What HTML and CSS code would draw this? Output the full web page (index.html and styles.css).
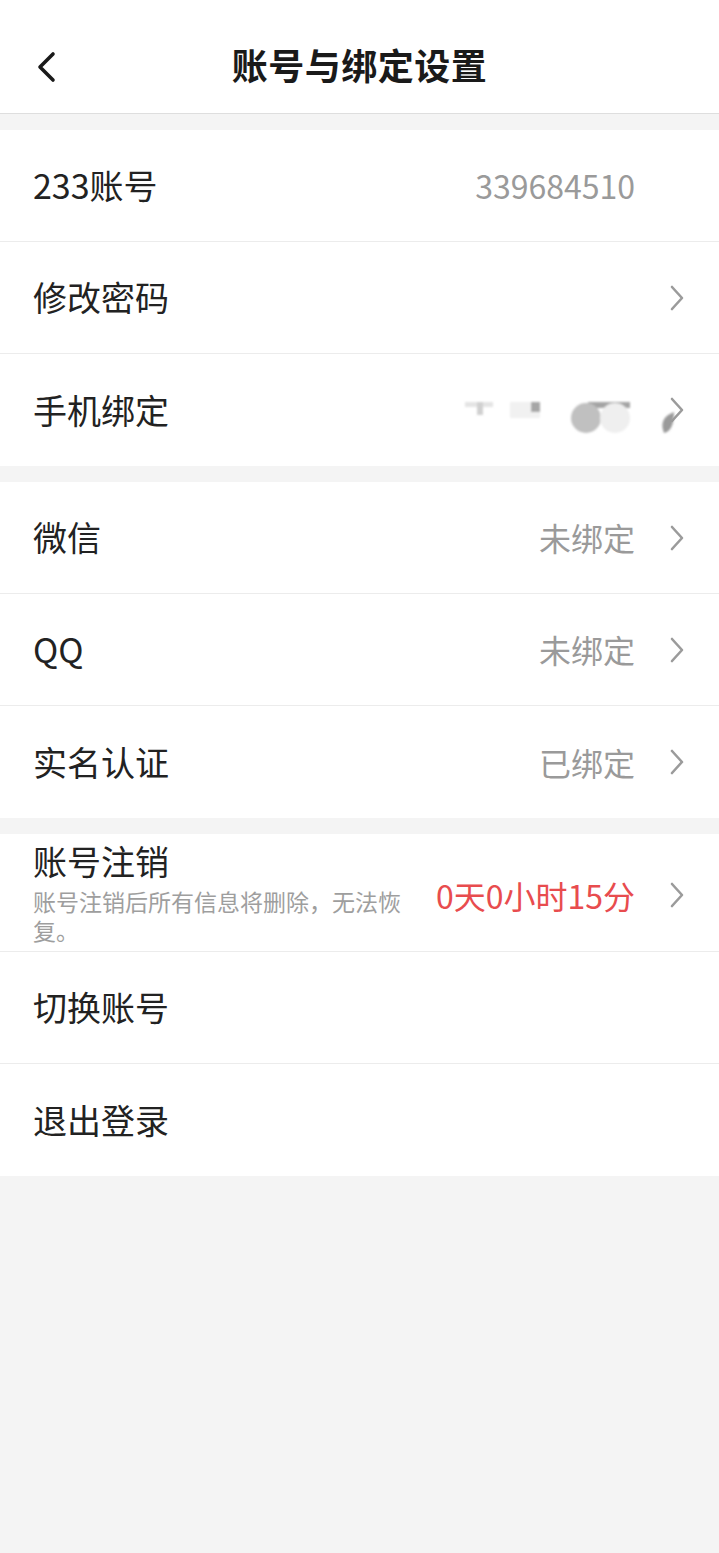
FILE: index.html
```html
<!DOCTYPE html>
<html lang="zh-CN">
<head>
<meta charset="utf-8">
<title>账号与绑定设置</title>
<link rel="stylesheet" href="styles.css">
</head>
<body>
<header class="topbar">
  <svg class="back" width="22" height="32" viewBox="0 0 22 32"><path d="M18 3 L5 16 L18 29" fill="none" stroke="#1a1a1a" stroke-width="3.6" stroke-linecap="round" stroke-linejoin="round"/></svg>
  <h1 class="title">账号与绑定设置</h1>
</header>

<section class="group">
  <div class="row">
    <span class="label">233账号</span>
    <span class="value">339684510</span>
    <span class="chev-space"></span>
  </div>
  <div class="row">
    <span class="label">修改密码</span>
    <svg class="chev" width="18" height="28" viewBox="0 0 18 28"><path d="M4 3 L14 14 L4 25" fill="none" stroke="#9b9b9b" stroke-width="2.6" stroke-linecap="round" stroke-linejoin="round"/></svg>
  </div>
  <div class="row row-phone">
    <span class="label">手机绑定</span>
    <svg class="chev" width="18" height="28" viewBox="0 0 18 28"><path d="M4 3 L14 14 L4 25" fill="none" stroke="#9b9b9b" stroke-width="2.6" stroke-linecap="round" stroke-linejoin="round"/></svg>
    <svg class="redact" width="230" height="44" viewBox="0 0 230 44">
      <defs><filter id="bl" x="-20%" y="-20%" width="140%" height="140%"><feGaussianBlur stdDeviation="1.3"/></filter></defs>
      <g filter="url(#bl)">
        <rect x="5" y="4" width="28" height="5" fill="#e4e4e4"/>
        <rect x="17" y="4" width="6" height="13" fill="#d0d0d0"/>
        <rect x="50" y="4" width="30" height="16" fill="#f1f1f1"/>
        <rect x="71" y="4" width="9" height="10" fill="#a6a6a6"/>
        <rect x="128" y="4" width="42" height="6" fill="#a4a4a4"/>
        <circle cx="126" cy="20" r="15" fill="#c0c0c0"/>
        <circle cx="155" cy="20" r="15" fill="#efefef"/>
        <path d="M214 14 Q198 20 204 35 Q214 33 214 14Z" fill="#9a9a9a"/>
      </g>
    </svg>
  </div>
</section>

<section class="group">
  <div class="row">
    <span class="label">微信</span>
    <span class="value">未绑定</span>
    <svg class="chev" width="18" height="28" viewBox="0 0 18 28"><path d="M4 3 L14 14 L4 25" fill="none" stroke="#9b9b9b" stroke-width="2.6" stroke-linecap="round" stroke-linejoin="round"/></svg>
  </div>
  <div class="row">
    <span class="label">QQ</span>
    <span class="value">未绑定</span>
    <svg class="chev" width="18" height="28" viewBox="0 0 18 28"><path d="M4 3 L14 14 L4 25" fill="none" stroke="#9b9b9b" stroke-width="2.6" stroke-linecap="round" stroke-linejoin="round"/></svg>
  </div>
  <div class="row">
    <span class="label">实名认证</span>
    <span class="value">已绑定</span>
    <svg class="chev" width="18" height="28" viewBox="0 0 18 28"><path d="M4 3 L14 14 L4 25" fill="none" stroke="#9b9b9b" stroke-width="2.6" stroke-linecap="round" stroke-linejoin="round"/></svg>
  </div>
</section>

<section class="group">
  <div class="row row-tall">
    <div class="stack">
      <span class="label">账号注销</span>
      <span class="sub">账号注销后所有信息将删除，无法恢复。</span>
    </div>
    <span class="value value-red">0天0小时15分</span>
    <svg class="chev" width="18" height="28" viewBox="0 0 18 28"><path d="M4 3 L14 14 L4 25" fill="none" stroke="#9b9b9b" stroke-width="2.6" stroke-linecap="round" stroke-linejoin="round"/></svg>
  </div>
  <div class="row">
    <span class="label">切换账号</span>
  </div>
  <div class="row">
    <span class="label">退出登录</span>
  </div>
</section>
</body>
</html>
```

FILE: styles.css
```css
* { box-sizing: border-box; }
html, body {
  margin: 0;
  padding: 0;
  background: #f4f4f4;
  font-family: "Noto Sans CJK SC", "Noto Sans", sans-serif;
  color: #222;
}
body { min-height: 1553px; }

.topbar {
  height: 114px;
  background: #fff;
  border-bottom: 1px solid #dedede;
  display: flex;
  align-items: center;
  justify-content: center;
  position: relative;
}
.back {
  position: absolute;
  left: 35px;
  top: 51px;
}
.title {
  margin: 0;
  font-size: 36px;
  font-weight: 700;
  color: #1a1a1a;
  letter-spacing: 0.5px;
  padding-top: 14px;
}

.group {
  background: #fff;
  margin-top: 16px;
}

.row {
  height: 112px;
  display: flex;
  align-items: center;
  padding: 0 33px;
  border-bottom: 1px solid #ececec;
  position: relative;
}
.row:last-child { border-bottom: none; }
.row-tall {
  height: 118px;
  align-items: flex-start;
  padding-top: 5px;
}
.row-tall .value,
.row-tall .chev { align-self: center; }

.label {
  font-size: 34px;
  color: #222;
  flex: 1;
  line-height: 1.2;
}
.value {
  font-size: 32px;
  color: #9a9a9a;
  line-height: 1.2;
}
.value-red { color: #e84c4e; }

.chev { margin-left: 33px; margin-right: 0; flex: none; }
.chev-space { width: 51px; flex: none; }

.stack {
  flex: 1;
  display: flex;
  flex-direction: column;
}
.stack .label {
  flex: none;
  line-height: 44px;
  margin-bottom: 4px;
}
.sub {
  font-size: 23px;
  line-height: 29px;
  color: #9e9e9e;
  width: 372px;
}

.redact {
  position: absolute;
  left: 460px;
  top: 44px;
}
.row-phone .chev { margin-left: auto; }
```
